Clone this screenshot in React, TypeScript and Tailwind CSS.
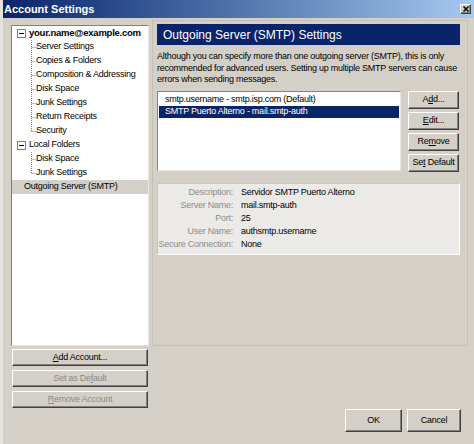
import React from "react";

// classic 3d button edges
const raised =
  "border border-t-white border-l-white border-r-[#404040] border-b-[#404040] shadow-[inset_-1px_-1px_0_#808080] bg-[#d4d0c8]";

function Btn({ children, className = "", disabled = false }: { children: React.ReactNode; className?: string; disabled?: boolean }) {
  return (
    <div
      className={`${raised} flex items-center justify-center ${disabled ? "text-[#8f8b84]" : "text-black"} ${className}`}
    >
      {children}
    </div>
  );
}

function MinusBox() {
  return (
    <svg width="9" height="9" viewBox="0 0 9 9" className="shrink-0">
      <rect x="0.5" y="0.5" width="8" height="8" fill="white" stroke="#808080" />
      <line x1="2" y1="4.5" x2="7" y2="4.5" stroke="black" />
    </svg>
  );
}

function Connector({ last = false }: { last?: boolean }) {
  return (
    <svg width="5" height="14" viewBox="0 0 5 14" className="shrink-0">
      <line x1="0.5" y1="0" x2="0.5" y2={last ? 7 : 14} stroke="#808080" strokeDasharray="1 1" />
      <line x1="0.5" y1="7.5" x2="5" y2="7.5" stroke="#808080" strokeDasharray="1 1" />
    </svg>
  );
}

const accountItems = [
  "Server Settings",
  "Copies & Folders",
  "Composition & Addressing",
  "Disk Space",
  "Junk Settings",
  "Return Receipts",
  "Security",
];

const localItems = ["Disk Space", "Junk Settings"];

const details: [string, string][] = [
  ["Description:", "Servidor SMTP Puerto Alterno"],
  ["Server Name:", "mail.smtp-auth"],
  ["Port:", "25"],
  ["User Name:", "authsmtp.username"],
  ["Secure Connection:", "None"],
];

export default function App() {
  return (
    <div className="w-[474px] h-[444px] bg-[#d4d0c8] flex flex-col overflow-hidden font-['Liberation_Sans',Arial,sans-serif] text-[9px] tracking-[-0.25px] text-black border-l-[3px] border-l-[#e4e2dc]">
      {/* title bar */}
      <div className="h-[18px] shrink-0 flex items-center justify-between pl-[1px] pr-[3px] bg-gradient-to-r from-[#0a246a] to-[#a6caf0]">
        <span className="text-white font-bold text-[11px] tracking-normal">Account Settings</span>
        <div className={`${raised} w-[11px] h-[10px] flex items-center justify-center`}>
          <svg width="6" height="6" viewBox="0 0 6 6">
            <path d="M0.5 0.5 L5.5 5.5 M5.5 0.5 L0.5 5.5" stroke="black" strokeWidth="1.5" />
          </svg>
        </div>
      </div>

      <div className="flex items-start pl-[8px]">
        {/* accounts tree */}
        <div className="w-[138px] mt-[7px] flex flex-col">
          <div className="h-[321px] bg-white border border-t-[#808080] border-l-[#808080] border-r-[#e8e6e0] border-b-[#e8e6e0] flex flex-col">
            <div className="h-[14px] flex items-center pl-[5px] gap-[3px]">
              <MinusBox />
              <span className="font-bold text-[9.5px]">your.name@example.com</span>
            </div>
            {accountItems.map((item, i) => (
              <div key={i} className="h-[14px] flex items-center pl-[19px]">
                <Connector last={i === accountItems.length - 1} />
                <span>{item}</span>
              </div>
            ))}
            <div className="h-[14px] flex items-center pl-[5px] gap-[3px]">
              <MinusBox />
              <span>Local Folders</span>
            </div>
            {localItems.map((item, i) => (
              <div key={i} className="h-[14px] flex items-center pl-[19px]">
                <Connector last={i === localItems.length - 1} />
                <span>{item}</span>
              </div>
            ))}
            <div className="h-[14px] flex items-center pl-[12px] bg-[#d4d0c8]">
              <span>Outgoing Server (SMTP)</span>
            </div>
          </div>
          <div className="flex flex-col gap-[4px] mt-[3px] px-[1px]">
            <Btn className="h-[17px]">
              <span>
                <u>A</u>dd Account...
              </span>
            </Btn>
            <Btn className="h-[17px]" disabled>
              <span>
                Set as De<u>f</u>ault
              </span>
            </Btn>
            <Btn className="h-[17px]" disabled>
              <span>
                <u>R</u>emove Account
              </span>
            </Btn>
          </div>
        </div>

        {/* right side */}
        <div className="ml-[3px] w-[316px] mt-[2px] flex flex-col">
          <div className="h-[326px] border border-[#c4c0b8] pt-[2px] pl-[4px] pr-[7px] flex flex-col">
            <div className="h-[22px] bg-[#0a246a] flex items-center pl-[6px] border-t border-[#c8d0e0]">
              <span className="text-white text-[12px] tracking-normal">Outgoing Server (SMTP) Settings</span>
            </div>
            <p className="mt-[6px] leading-[11.5px]">
              Although you can specify more than one outgoing server (SMTP), this is only recommended for advanced users.
              Setting up multiple SMTP servers can cause errors when sending messages.
            </p>
            <div className="flex mt-[5px]">
              <div className="w-[244px] h-[80px] bg-white border border-t-[#808080] border-l-[#808080] border-r-[#e8e6e0] border-b-[#e8e6e0] p-[1px] flex flex-col">
                <div className="h-[12px] flex items-center pl-[6px] mt-[1px]">smtp.username - smtp.isp.com (Default)</div>
                <div className="h-[12px] flex items-center pl-[6px] bg-[#0a246a] text-white">
                  SMTP Puerto Alterno - mail.smtp-auth
                </div>
              </div>
              <div className="ml-[7px] w-[51px] flex flex-col gap-[3px]">
                <Btn className="h-[18px]">
                  <span>
                    A<u>d</u>d...
                  </span>
                </Btn>
                <Btn className="h-[18px]">
                  <span>
                    <u>E</u>dit...
                  </span>
                </Btn>
                <Btn className="h-[18px]">
                  <span>
                    Re<u>m</u>ove
                  </span>
                </Btn>
                <Btn className="h-[18px]">
                  <span className="whitespace-nowrap">
                    Se<u>t</u> Default
                  </span>
                </Btn>
              </div>
            </div>
            <div className="mt-[11px] h-[72px] bg-[#ebeae6] border border-t-[#c9c5bd] border-l-[#c9c5bd] border-r-white border-b-white pt-[3px] flex flex-col">
              {details.map(([label, value]) => (
                <div key={label} className="h-[13px] flex items-center">
                  <div className="w-[75px] flex justify-end">
                    <span className="whitespace-nowrap text-[#8c8c8c]">{label}</span>
                  </div>
                  <span className="ml-[8px] whitespace-nowrap">{value}</span>
                </div>
              ))}
            </div>
          </div>
          <div className="flex justify-end gap-[5px] mt-[63px] pr-[7px]">
            <Btn className="w-[57px] h-[23px]">OK</Btn>
            <Btn className="w-[54px] h-[23px]">Cancel</Btn>
          </div>
        </div>
      </div>
    </div>
  );
}
